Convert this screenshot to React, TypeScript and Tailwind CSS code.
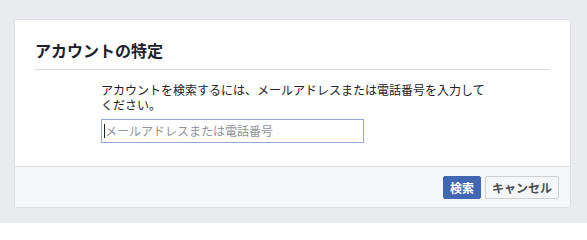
export default function App() {
  return (
    <div
      className="min-h-[223px] w-[587px] bg-[#e9ebee] pt-[19px] pl-[14px]"
      style={{ fontFamily: '"Noto Sans CJK JP", "Noto Sans", sans-serif' }}
    >
      <div className="w-[557px] overflow-hidden rounded-[3px] border border-[#dddfe2] bg-white">
        <div className="px-5">
          <div className="border-b border-[#dadde1] pt-[20px] pb-[9px]">
            <h2 className="text-[16px] font-bold leading-[20px] text-[#1d2129]">アカウントの特定</h2>
          </div>
          <div className="pl-[66px] pt-[12px] pb-[23px]">
            <p className="w-[392px] text-[12px] leading-[15px] text-[#1d2129]">
              アカウントを検索するには、メールアドレスまたは電話番号を入力してください。
            </p>
            <div className="mt-[7px] flex h-[24px] w-[263px] items-center border border-[#8ea7d6] px-[2px]">
              <span className="h-[14px] w-px bg-[#1d2129]" />
              <span className="text-[12px] leading-[14px] text-[#90949c]">メールアドレスまたは電話番号</span>
            </div>
          </div>
        </div>
        <div className="flex justify-end gap-[4px] border-t border-[#dddfe2] bg-[#f5f6f7] pt-[9px] pr-[11px] pb-[8px]">
          <button className="h-[23px] rounded-[2px] border border-[#4267b2] bg-[#4267b2] px-[6px] text-[12px] font-bold leading-[21px] text-white">
            検索
          </button>
          <button className="h-[23px] rounded-[2px] border border-[#ced0d4] bg-[#f5f6f7] px-[6px] text-[12px] font-bold leading-[21px] text-[#4b4f56]">
            キャンセル
          </button>
        </div>
      </div>
    </div>
  );
}
